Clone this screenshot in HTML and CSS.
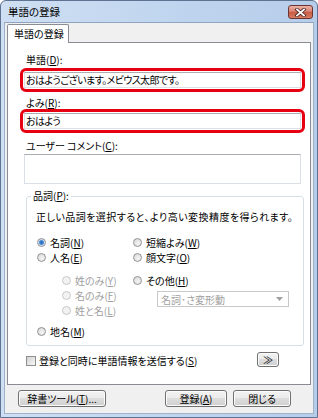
FILE: index.html
```
<!DOCTYPE html>
<html lang="ja">
<head>
    <meta charset="UTF-8">
    <title>単語の登録</title>
    <link rel="stylesheet" href="styles.css">
</head>
<body>
    <div class="window">
        <div class="titlebar">
            <span class="title">単語の登録</span>
            <button class="close">
                <svg width="13" height="9" viewBox="0 0 13 9">
                    <path d="M3 1.5 L10 7.5 M10 1.5 L3 7.5" stroke="#4a2020" stroke-width="3.4" stroke-linecap="square"/>
                    <path d="M3 1.5 L10 7.5 M10 1.5 L3 7.5" stroke="#fff" stroke-width="1.8" stroke-linecap="square"/>
                </svg>
            </button>
        </div>
        <div class="client">
            <div class="tabs">
                <div class="tab">単語の登録</div>
            </div>
            <div class="panel">
                <!-- 単語 / よみ -->
                <div class="label">単語(<u>D</u>):</div>
                <div class="mark">
                    <div class="textbox">おはようございます。メビウス太郎です。</div>
                </div>
                <div class="label label-yomi">よみ(<u>R</u>):</div>
                <div class="mark mark-yomi">
                    <div class="textbox">おはよう</div>
                </div>

                <div class="label label-comment">ユーザー コメント(<u>C</u>):</div>
                <div class="comment"></div>

                <!-- 品詞 -->
                <fieldset class="group">
                    <legend>品詞(<u>P</u>):</legend>
                    <div class="hint">正しい品詞を選択すると、より高い変換精度を得られます。</div>
                    <div class="choices">
                        <div class="opt r1 c1"><span class="radio on"></span>名詞(<u>N</u>)</div>
                        <div class="opt r1 c2"><span class="radio"></span>短縮よみ(<u>W</u>)</div>
                        <div class="opt r2 c1"><span class="radio"></span>人名(<u>E</u>)</div>
                        <div class="opt r2 c2"><span class="radio"></span>顔文字(<u>O</u>)</div>
                        <div class="opt r3 c1 sub off"><span class="radio"></span>姓のみ(<u>Y</u>)</div>
                        <div class="opt r3 c2"><span class="radio"></span>その他(<u>H</u>)</div>
                        <div class="opt r4 c1 sub off"><span class="radio"></span>名のみ(<u>F</u>)</div>
                        <div class="select r4 c2">
                            <span>名詞･さ変形動</span>
                            <svg width="7" height="4" viewBox="0 0 7 4"><path d="M0 0 H7 L3.5 4 Z" fill="#a0a0a0"/></svg>
                        </div>
                        <div class="opt r5 c1 sub off"><span class="radio"></span>姓と名(<u>L</u>)</div>
                        <div class="opt r6 c1"><span class="radio"></span>地名(<u>M</u>)</div>
                    </div>
                </fieldset>

                <div class="send-row">
                    <span class="checkbox"></span>
                    <span class="send-text">登録と同時に単語情報を送信する(<u>S</u>)</span>
                    <button class="btn more">≫</button>
                </div>
            </div>
            <div class="footer">
                <button class="btn tools">辞書ツール(<u>T</u>)...</button>
                <button class="btn ok">登録(<u>A</u>)</button>
                <button class="btn close-btn">閉じる</button>
            </div>
        </div>
    </div>
</body>
</html>
```

FILE: styles.css
```
body {
    margin: 0;
    font-family: "Noto Sans CJK JP", "Noto Sans", sans-serif;
    font-size: 10px;
    font-feature-settings: "palt";
    color: #000;
    background: #fff;
}
u {
    text-decoration-thickness: 1px;
    text-underline-offset: 1px;
}
.window {
    width: 318px;
    height: 418px;
    box-sizing: border-box;
    border: 1px solid #5d7391;
    border-radius: 6px 6px 0 0;
    background: linear-gradient(to right, #cfdff3, #bed4ee 60%, #b6cdea);
    padding: 0 3px 3px;
    display: flex;
    flex-direction: column;
}
.titlebar {
    height: 21px;
    display: flex;
    align-items: center;
    padding-left: 4px;
    padding-right: 1px;
    flex: none;
}
.title {
    font-size: 10.5px;
    flex: 1;
    margin-top: -1px;
}
.close {
    width: 25px;
    height: 14px;
    margin-top: 1px;
    padding: 0;
    border: 1px solid #6b3434;
    border-radius: 3px;
    background: linear-gradient(#eeb3a6, #d98373 45%, #c85a44 50%, #d77d62);
    display: flex;
    align-items: center;
    justify-content: center;
}
.client {
    flex: 1;
    background: #f0f0f0;
    border: 1px solid #9fb2cb;
    border-top-color: #8ea4c1;
    padding: 1px 2px 0;
    display: flex;
    flex-direction: column;
}
.tabs {
    display: flex;
    flex: none;
}
.tab {
    position: relative;
    width: 62px;
    height: 19px;
    box-sizing: border-box;
    margin-bottom: -1px;
    border: 1px solid #898c95;
    border-bottom: none;
    border-radius: 2px 2px 0 0;
    background: #fff;
    line-height: 18px;
    padding-left: 6px;
}
.panel {
    height: 343px;
    box-sizing: border-box;
    border: 1px solid #898c95;
    background: #fff;
    padding-top: 11px;
    flex: none;
}
.label {
    line-height: 12px;
    margin-left: 18px;
}
.label-yomi { margin-top: 5px; }
.label-comment { margin-top: 7px; }
.mark {
    width: 285px;
    box-sizing: border-box;
    margin: 2px 0 0 12px;
    border: 3px solid #e60012;
    border-radius: 6px;
    padding: 1px;
}
.mark-yomi { margin-top: 0; }
.textbox {
    height: 16px;
    box-sizing: border-box;
    border: 1px solid #dbdfe6;
    border-top-color: #abadb3;
    background: #fff;
    line-height: 14px;
    padding-left: 1px;
    letter-spacing: -0.6px;
}
.comment {
    width: 277px;
    height: 30px;
    box-sizing: border-box;
    margin: 2px 0 0 16px;
    border: 1px solid #dbdfe6;
    border-top-color: #abadb3;
    background: #fff;
}
.group {
    width: 278px;
    height: 156px;
    box-sizing: border-box;
    margin: 6px 0 0 18px;
    padding: 0 0 0 9px;
    border: 1px solid #d5dfe5;
    border-radius: 3px;
}
.group legend {
    padding: 0 2px;
    margin-left: -5px;
    line-height: 12px;
}
.hint {
    line-height: 12px;
    margin-top: 9px;
    letter-spacing: 0.45px;
}
.choices {
    display: grid;
    grid-template-columns: 96px 1fr;
    grid-template-rows: 15px 15px 23px 15px 15px 21px;
    margin-top: 12px;
    margin-left: 1px;
}
.opt {
    display: flex;
    align-items: center;
    height: 15px;
    align-self: end;
    white-space: nowrap;
}
.r1 { grid-row: 1; }
.r2 { grid-row: 2; }
.r3 { grid-row: 3; }
.r4 { grid-row: 4; }
.r5 { grid-row: 5; }
.r6 { grid-row: 6; }
.c1 { grid-column: 1; }
.c2 { grid-column: 2; }
.sub { padding-left: 25px; }
.off { color: #a0a0a0; }
.radio {
    width: 9px;
    height: 9px;
    box-sizing: border-box;
    border: 1px solid #929292;
    border-radius: 50%;
    background: radial-gradient(circle at 60% 65%, #f4f4f4, #d6d6d6);
    margin-right: 4px;
    flex: none;
}
.radio.on {
    background: radial-gradient(circle, #1c5fb5 0, #4d90d8 2px, #cfdff0 3px, #e8e8e8 4px);
}
.off .radio {
    border-color: #c8c8c8;
    background: #f2f2f2;
}
.select {
    grid-row: 4 / span 2;
    align-self: start;
    margin: 3px 0 0 24px;
    width: 132px;
    height: 16px;
    box-sizing: border-box;
    border: 1px solid #c9c9c9;
    background: #fff;
    color: #a0a0a0;
    display: flex;
    align-items: center;
    justify-content: space-between;
    padding: 0 5px 0 3px;
}
.send-row {
    display: flex;
    align-items: flex-end;
    margin: 6px 31px 0 18px;
}
.checkbox {
    width: 10px;
    height: 10px;
    box-sizing: border-box;
    border: 1px solid #8f8f8f;
    background: linear-gradient(135deg, #d2d2d2, #f7f7f7);
    margin: 0 3px 1px 0;
}
.send-text {
    line-height: 12px;
}
.btn {
    font-family: inherit;
    font-size: 10px;
    font-feature-settings: "palt";
    padding: 0;
    border: 1px solid #707070;
    border-radius: 3px;
    background: linear-gradient(#f2f2f2, #ebebeb 49%, #dddddd 50%, #cfcfcf);
    box-shadow: inset 0 0 0 1px #fcfcfc;
    color: #000;
    line-height: 13px;
}
.more {
    margin-left: auto;
    width: 22px;
    height: 15px;
    font-size: 10px;
}
.footer {
    display: flex;
    padding: 5px 20px 0 11px;
}
.tools {
    width: 88px;
    height: 17px;
}
.ok {
    margin-left: auto;
    width: 62px;
    height: 17px;
}
.close-btn {
    margin-left: 6px;
    width: 58px;
    height: 17px;
}
```
